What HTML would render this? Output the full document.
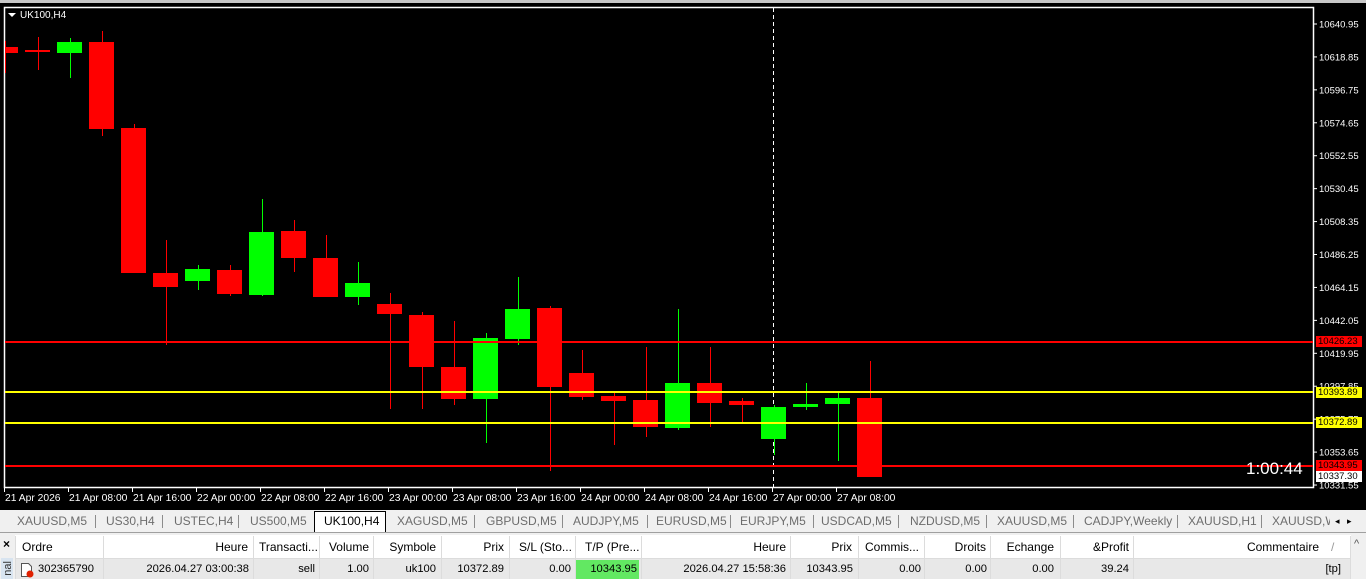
<!DOCTYPE html>
<html><head><meta charset="utf-8"><style>
*{margin:0;padding:0;box-sizing:border-box}
body{width:1366px;height:579px;overflow:hidden;background:#f0f0f0;font-family:"Liberation Sans",sans-serif;position:relative}
.a{position:absolute}
#chart{left:0;top:3px;width:1366px;height:507px;background:#000}
.ax{color:#fff;font-size:9.5px;white-space:nowrap}
.pl{position:absolute;font-size:9.5px;left:1316px;width:46px;height:11px;line-height:11px;padding-left:2px}
.tab{position:absolute;top:514px;font-size:12px;color:#6d6d6d;white-space:nowrap}
.sep{position:absolute;top:515px;width:1px;height:13px;background:#8c8c8c}
.h{position:absolute;top:536px;height:23px;line-height:23px;font-size:12px;color:#000;white-space:nowrap}
.r{position:absolute;top:560px;height:19px;line-height:19px;font-size:11.2px;color:#000;white-space:nowrap}
.cl{position:absolute;top:536px;width:1px;height:43px;background:#dcdcdc}
</style></head><body>
<div class="a" style="left:0;top:0;width:1366px;height:3px;background:#c8c8c8"></div>
<div id="chart" class="a"></div>
<svg class="a" style="left:0;top:0" width="1366" height="510">
<rect x="4.5" y="7.5" width="1309" height="480" fill="none" stroke="#fff" stroke-width="1.5"/>
<line x1="773.5" y1="8" x2="773.5" y2="488" stroke="#fff" stroke-dasharray="4,3"/>
<g id="c"></g>
<rect x="5" y="341" width="1308" height="2" fill="#f00"/>
<rect x="5" y="391" width="1308" height="2" fill="#ff0"/>
<rect x="5" y="422" width="1308" height="2" fill="#ff0"/>
<rect x="5" y="465" width="1308" height="2" fill="#f00"/>
<polygon points="8,13 16,13 12,17" fill="#fff"/>
<text x="20" y="18" fill="#fff" font-size="10" font-family="Liberation Sans">UK100,H4</text>
</svg>
<div class="a ax" style="left:1246px;top:459px;font-size:17px">1:00:44</div>
<div class="pl" style="top:336px;background:#f00;color:#000">10426.23</div>
<div class="pl" style="top:387px;background:#ff0;color:#000">10393.89</div>
<div class="pl" style="top:417px;background:#ff0;color:#000">10372.89</div>
<div class="pl" style="top:460px;background:#f00;color:#000">10343.95</div>
<div class="pl" style="top:471px;background:#fff;color:#000">10337.30</div>
<div class="a" style="left:314px;top:511px;width:72px;height:21px;background:#fff;border:1px solid #000;border-bottom:none"></div>
<div class="a" style="left:0;top:532px;width:1366px;height:1px;background:#a0a0a0"></div>
<div class="a" style="left:15px;top:535px;width:1351px;height:44px;background:#fff"></div>
<div class="a" style="left:15px;top:559px;width:1335px;height:20px;background:#e8e8e8"></div>
<div class="a" style="left:576px;top:560px;width:63px;height:19px;background:#62e862"></div>
<div class="a" style="left:15px;top:558px;width:1335px;height:1px;background:#dcdcdc"></div>
<div class="a" style="left:3px;top:537px;font-size:12px;font-weight:bold">×</div>
<div class="a" style="left:1px;top:558px;width:12px;height:21px;background:#d8e4f0"></div>
<div class="a" style="left:2px;top:561px;font-size:11px;color:#333;writing-mode:vertical-rl;transform:rotate(180deg)">nal</div>
<div class="a" style="left:1351px;top:535px;width:15px;height:44px;background:#f0f0f0"></div>
<div class="a" style="left:1354px;top:538px;font-size:11px;color:#555">^</div>
<svg class="a" style="left:20px;top:562px" width="14" height="16"><path d="M1.5 1.5h7l3 3v10h-10z" fill="#fff" stroke="#555"/><circle cx="10" cy="12" r="3.5" fill="#e02000"/></svg>
<div id="tb"></div>
<script>
var C=[[4,18,47,53,41,73,0,5],[25,50,50,52,37,70,0],[57,82,42,53,38,78,1],[89,114,42,129,31,136,0],[121,146,128,273,124,273,0],[153,178,273,287,240,345,0],[185,210,269,281,265,290,1],[217,242,270,294,265,296,0],[249,274,232,295,199,296,1],[281,306,231,258,220,272,0],[313,338,258,297,235,297,0],[345,370,283,297,262,305,1],[377,402,304,314,293,409,0],[409,434,315,367,312,409,0],[441,466,367,399,321,405,0],[473,498,338,399,333,443,1],[505,530,309,339,277,345,1],[537,562,308,387,306,471,0],[569,594,373,397,350,400,0],[601,626,396,401,392,445,0],[633,658,400,427,347,437,0],[665,690,383,428,309,430,1],[697,722,383,403,347,427,0],[729,754,401,405,398,424,0],[761,786,407,439,405,455,1],[793,818,404,407,383,410,1],[825,850,398,404,393,461,1],[857,882,398,477,361,477,0]];
var s='';C.forEach(function(c){var col=c[6]?'#0f0':'#f00';var mx=c[7]||Math.round((c[0]+c[1])/2);s+='<rect x="'+mx+'" y="'+c[4]+'" width="1" height="'+(c[5]-c[4])+'" fill="'+col+'"/><rect x="'+Math.max(c[0],5)+'" y="'+c[2]+'" width="'+(c[1]-Math.max(c[0],5))+'" height="'+(c[3]-c[2])+'" fill="'+col+'"/>';});
var T=['21 Apr 2026','21 Apr 08:00','21 Apr 16:00','22 Apr 00:00','22 Apr 08:00','22 Apr 16:00','23 Apr 00:00','23 Apr 08:00','23 Apr 16:00','24 Apr 00:00','24 Apr 08:00','24 Apr 16:00','27 Apr 00:00','27 Apr 08:00'];
T.forEach(function(t,i){var x=4+i*64;s+='<line x1="'+(x+0.5)+'" y1="488" x2="'+(x+0.5)+'" y2="492" stroke="#fff"/><text x="'+(x+1)+'" y="501" fill="#fff" font-size="10.3" font-family="Liberation Sans">'+t+'</text>';});
var P=['10640.95','10618.85','10596.75','10574.65','10552.55','10530.45','10508.35','10486.25','10464.15','10442.05','10419.95','10397.85','10375.75','10353.65','10331.55'];
P.forEach(function(p,i){var y=24+i*32.93;s+='<line x1="1313" y1="'+y+'" x2="1317" y2="'+y+'" stroke="#fff"/><text x="1319" y="'+(y+3.5)+'" fill="#fff" font-size="9.5" font-family="Liberation Sans">'+p+'</text>';});
document.getElementById('c').innerHTML=s;
var tabs=[[17,'XAUUSD,M5'],[106,'US30,H4'],[174,'USTEC,H4'],[250,'US500,M5'],[324,'UK100,H4'],[397,'XAGUSD,M5'],[486,'GBPUSD,M5'],[573,'AUDJPY,M5'],[656,'EURUSD,M5'],[740,'EURJPY,M5'],[821,'USDCAD,M5'],[910,'NZDUSD,M5'],[997,'XAUUSD,M5'],[1084,'CADJPY,Weekly'],[1188,'XAUUSD,H1'],[1272,'XAUUSD,W']];
var h='';tabs.forEach(function(t,i){h+='<div class="tab" style="left:'+t[0]+'px;'+(i==4?'color:#000':'')+'">'+t[1]+'</div>';});
[95,162,238,474,562,647,730,813,898,986,1073,1177,1261].forEach(function(x){h+='<div class="sep" style="left:'+x+'px"></div>';});
h+='<div class="a" style="left:1330px;top:511px;width:36px;height:21px;background:#f0f0f0;font-size:9px;line-height:21px;color:#000">&nbsp;&nbsp;◂&nbsp;&nbsp;&nbsp;▸</div>';
[15,103,253,319,373,441,509,575,641,790,858,924,990,1060,1133,1350].forEach(function(x){h+='<div class="cl" style="left:'+x+'px"></div>';});
var hd=[['L',22,'Ordre'],['R',248,'Heure'],['L',259,'Transacti...'],['R',369,'Volume'],['R',436,'Symbole'],['R',504,'Prix'],['L',519,'S/L (Sto...'],['L',585,'T/P (Pre...'],['R',786,'Heure'],['R',852,'Prix'],['L',865,'Commis...'],['R',986,'Droits'],['R',1054,'Echange'],['R',1129,'&amp;Profit'],['R',1319,'Commentaire'],['L',1331,'<span style="color:#999">/</span>']];
hd.forEach(function(c){h+='<div class="h" style="'+(c[0]=='L'?'left:'+c[1]+'px':'right:'+(1366-c[1])+'px')+'">'+c[2]+'</div>';});
var rw=[['L',38,'302365790'],['R',249,'2026.04.27 03:00:38'],['R',315,'sell'],['R',369,'1.00'],['R',436,'uk100'],['R',504,'10372.89'],['R',571,'0.00'],['R',637,'10343.95'],['R',786,'2026.04.27 15:58:36'],['R',853,'10343.95'],['R',921,'0.00'],['R',987,'0.00'],['R',1054,'0.00'],['R',1129,'39.24'],['R',1341,'[tp]']];
rw.forEach(function(c){h+='<div class="r" style="'+(c[0]=='L'?'left:'+c[1]+'px':'right:'+(1366-c[1])+'px')+'">'+c[2]+'</div>';});
document.getElementById('tb').innerHTML=h;
</script>
</body></html>
